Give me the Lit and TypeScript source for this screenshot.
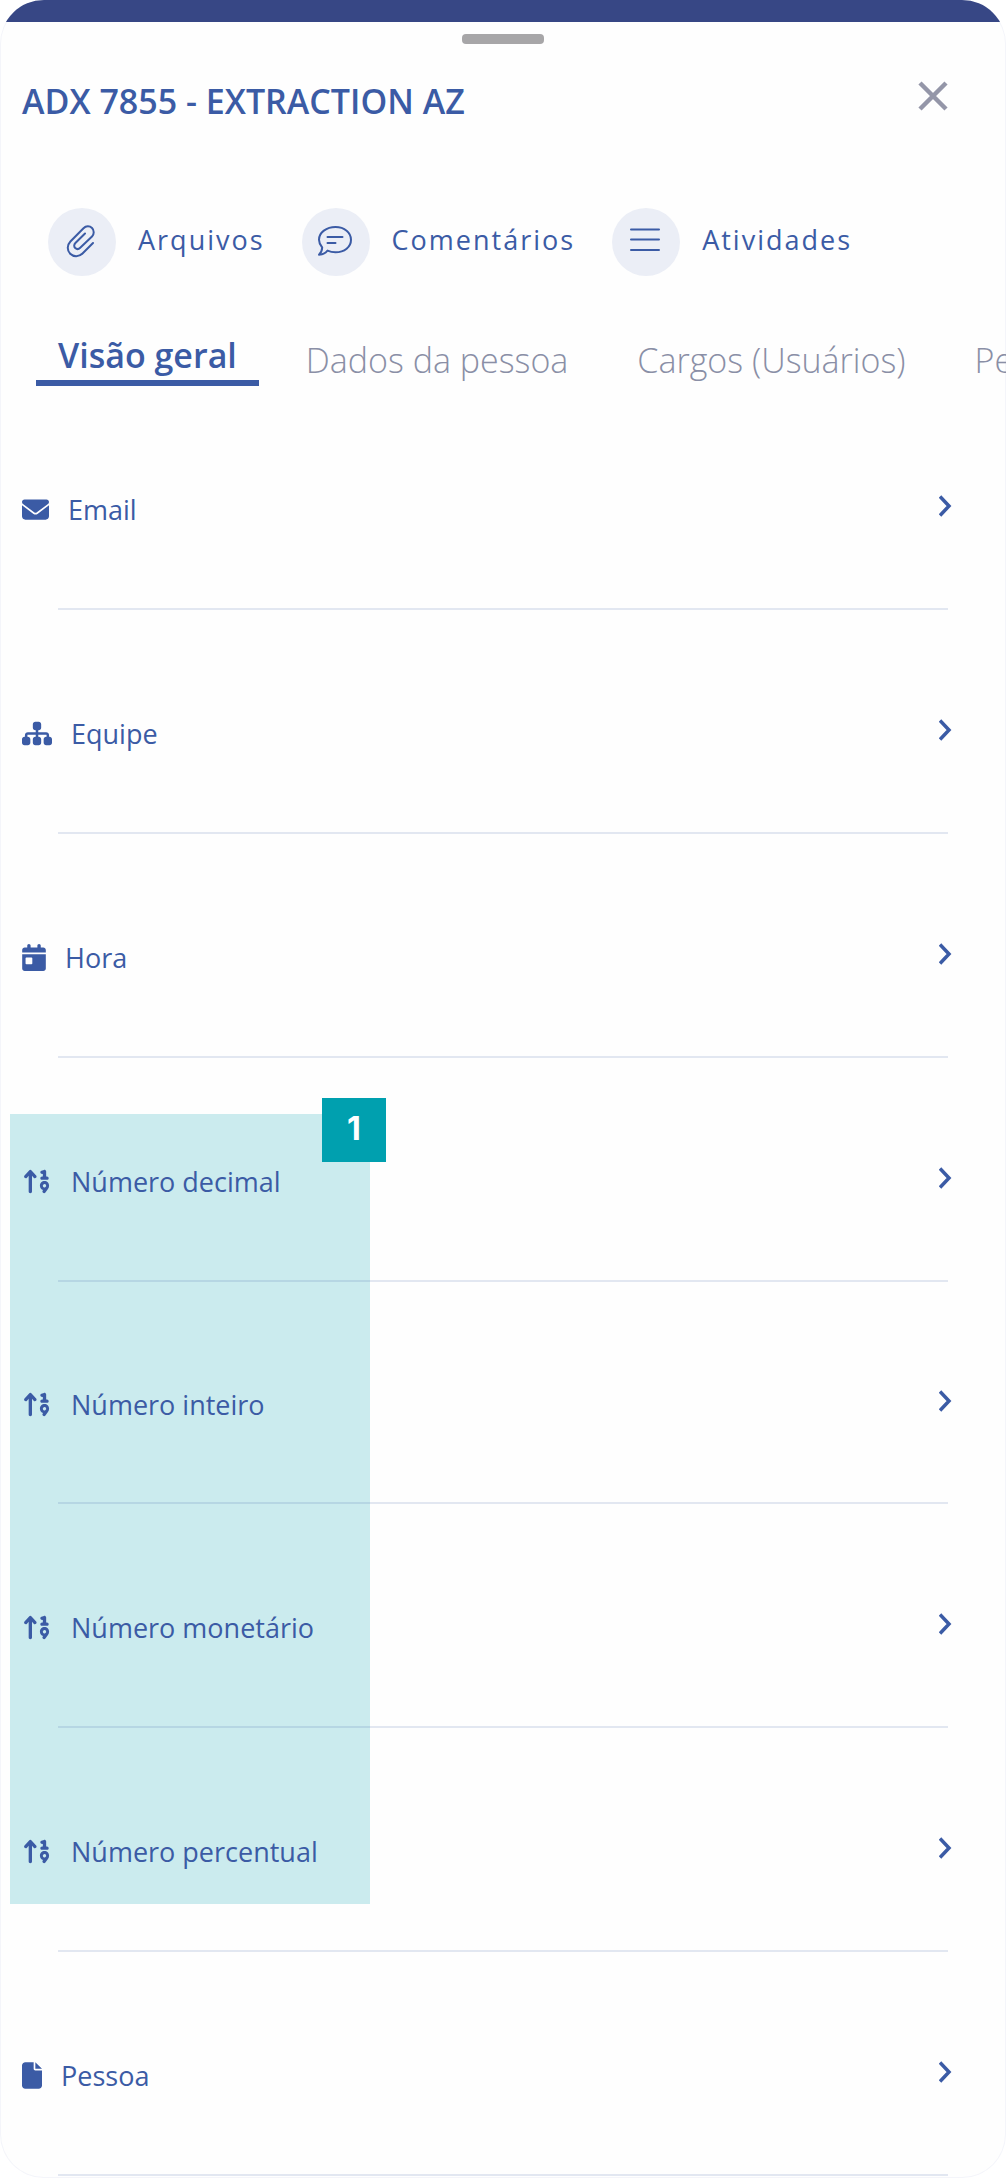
import { LitElement, html, css, svg } from "lit";
import { customElement, property, state } from "lit/decorators.js";

interface Glyph {
  width: number;
  view: string;
  path: string;
}

interface Field {
  label: string;
  icon: keyof typeof GLYPHS;
  short?: boolean;
}

const GLYPHS = {
  envelope: {
    width: 27,
    view: "0 0 512 512",
    path: "M48 64C21.5 64 0 85.5 0 112c0 15.1 7.1 29.3 19.2 38.4L236.8 313.6c11.4 8.5 27 8.5 38.4 0L492.8 150.4c12.1-9.1 19.2-23.3 19.2-38.4c0-26.5-21.5-48-48-48H48zM0 176V384c0 35.3 28.7 64 64 64H448c35.3 0 64-28.7 64-64V176L294.4 339.2c-22.8 17.1-54 17.1-76.8 0L0 176z",
  },
  sitemap: {
    width: 30,
    view: "0 0 576 512",
    path: "M208 80c0-26.5 21.5-48 48-48h64c26.5 0 48 21.5 48 48v64c0 26.5-21.5 48-48 48h-8v40H464c30.9 0 56 25.1 56 56v32h8c26.5 0 48 21.5 48 48v64c0 26.5-21.5 48-48 48H464c-26.5 0-48-21.5-48-48V368c0-26.5 21.5-48 48-48h8V288c0-4.4-3.6-8-8-8H312v40h8c26.5 0 48 21.5 48 48v64c0 26.5-21.5 48-48 48H256c-26.5 0-48-21.5-48-48V368c0-26.5 21.5-48 48-48h8V280H112c-4.4 0-8 3.6-8 8v32h8c26.5 0 48 21.5 48 48v64c0 26.5-21.5 48-48 48H48c-26.5 0-48-21.5-48-48V368c0-26.5 21.5-48 48-48h8V288c0-30.9 25.1-56 56-56H264V192h-8c-26.5 0-48-21.5-48-48V80z",
  },
  calendar: {
    width: 24,
    view: "0 0 448 512",
    path: "M128 0c17.7 0 32 14.3 32 32V64H288V32c0-17.7 14.3-32 32-32s32 14.3 32 32V64h48c26.5 0 48 21.5 48 48v48H0V112C0 85.5 21.5 64 48 64H96V32c0-17.7 14.3-32 32-32zM0 192H448V464c0 26.5-21.5 48-48 48H48c-26.5 0-48-21.5-48-48V192zm80 64c-8.8 0-16 7.2-16 16v96c0 8.8 7.2 16 16 16h96c8.8 0 16-7.2 16-16V272c0-8.8-7.2-16-16-16H80z",
  },
  number: {
    width: 30,
    view: "0 0 576 512",
    path: "M450.7 38c8.3 6 13.3 15.7 13.3 26v96h16c17.7 0 32 14.3 32 32s-14.3 32-32 32H432 384c-17.7 0-32-14.3-32-32s14.3-32 32-32h16V108.4l-5.9 2c-16.8 5.6-34.9-3.5-40.5-20.2s3.5-34.9 20.2-40.5l48-16c9.8-3.3 20.5-1.6 28.8 4.4zM160 32c9 0 17.5 3.8 23.6 10.4l88 96c11.9 13 11.1 33.3-2 45.2s-33.3 11.1-45.2-2L192 146.3V448c0 17.7-14.3 32-32 32s-32-14.3-32-32V146.3L95.6 181.6c-11.9 13-32.2 13.9-45.2 2s-13.9-32.2-2-45.2l88-96C142.5 35.8 151 32 160 32zM445.7 364.9A32 32 0 1 0 418.3 307a32 32 0 1 0 27.4 57.9zm-40.7 54.9C369.6 408.4 344 375.2 344 336c0-48.6 39.4-88 88-88s88 39.4 88 88c0 23.5-7.5 46.3-21.5 65.2L449.7 467c-10.5 14.2-30.6 17.2-44.8 6.7s-17.2-30.6-6.7-44.8l6.8-9.2z",
  },
  file: {
    width: 20,
    view: "0 0 384 512",
    path: "M0 64C0 28.7 28.7 0 64 0H224V128c0 17.7 14.3 32 32 32H384V448c0 35.3-28.7 64-64 64H64c-35.3 0-64-28.7-64-64V64zm384 64H256V0L384 128z",
  },
} satisfies Record<string, Glyph>;

const ACTIONS = [
  {
    label: "Arquivos",
    art: svg`<path d="M28 18 17.500 28.500c-3.500 3.500-9 3.500-12.300.2s-3.300-8.500.2-12.200L18.500 3.200c2.500-2.500 6.200-2.500 8.500-.2s2.300 6 0 8.500L15.200 22.800c-1.500 1.500-3.600 1.500-5 .2s-1.300-3.500.2-5L20 8.500"/>`,
  },
  {
    label: "Comentários",
    art: svg`<path d="M16.500 2C25.500 2 32 7.500 32 14.700s-6.500 12.600-15.500 12.600c-2.900 0-5.600-.6-8-1.700C6.500 28 4 29.700 0 29.700c2-2 3.100-4.500 3.200-7.200C1.300 20.300 0 17.700 0 14.700 0 7.500 7.500 2 16.500 2zM8.500 12h15M8.500 18h8"/>`,
  },
  {
    label: "Atividades",
    art: svg`<path d="M2 4.500h28M2 14.500h28M2 25h28"/>`,
  },
];

const TABS = ["Visão geral", "Dados da pessoa", "Cargos (Usuários)", "Pessoas"];

const BEFORE: Field[] = [
  { label: "Email", icon: "envelope" },
  { label: "Equipe", icon: "sitemap" },
  { label: "Hora", icon: "calendar" },
];
const NUMBERS: Field[] = [
  { label: "Número decimal", icon: "number" },
  { label: "Número inteiro", icon: "number", short: true },
  { label: "Número monetário", icon: "number" },
  { label: "Número percentual", icon: "number" },
];
const AFTER: Field[] = [{ label: "Pessoa", icon: "file" }];

@customElement("field-row")
export class FieldRow extends LitElement {
  @property({ attribute: false }) field!: Field;

  static styles = css`
    :host {
      display: block;
    }
    .row {
      display: flex;
      align-items: center;
      gap: 19px;
      box-sizing: border-box;
      width: 100%;
      min-height: 222px;
      padding: 25px 54px 0 22px;
      border: 0;
      background: none;
      color: #3b5ba5;
      font: 400 27px/36px "Open Sans", sans-serif;
      text-align: left;
      cursor: pointer;
    }
    .short {
      min-height: 220px;
    }
    .glyph {
      flex: none;
      height: 27px;
      fill: currentColor;
    }
    .label {
      flex: 1;
    }
    .chevron {
      flex: none;
      width: 13px;
      height: 24px;
      padding-bottom: 8px;
      fill: none;
      stroke: currentColor;
      stroke-width: 3.5;
    }
    .line {
      height: 2px;
      margin: 0 58px;
      background: rgba(59, 91, 165, 0.14);
    }
  `;

  render() {
    const g = GLYPHS[this.field.icon];
    return html`
      <button class="row ${this.field.short ? "short" : ""}" type="button">
        <svg class="glyph" width=${g.width} viewBox=${g.view} aria-hidden="true">
          <path d=${g.path} />
        </svg>
        <span class="label">${this.field.label}</span>
        <svg class="chevron" viewBox="0 0 13 24" aria-hidden="true">
          <path d="M1 2.500 10 12 1 21.500" />
        </svg>
      </button>
      <div class="line"></div>
    `;
  }
}

@customElement("app-root")
export class AppRoot extends LitElement {
  @state() private tab = 0;

  static styles = css`
    :host {
      display: block;
      color: #3b5ba5;
      font-family: "Open Sans", sans-serif;
    }
    .sheet {
      overflow: hidden;
      padding-bottom: 2px;
      border-radius: 44px;
      background: #fefefe;
      box-shadow: inset 0 0 0 1px #f4f5fa;
    }
    .bar {
      height: 22px;
      background: #374785;
    }
    .handle {
      width: 82px;
      height: 10px;
      margin: 12px auto 0;
      border-radius: 4px;
      background: #a7a6a8;
    }
    .header {
      display: flex;
      justify-content: space-between;
      align-items: flex-start;
      padding: 33px 58px 0 22px;
    }
    .title {
      margin: 0;
      font-size: 34px;
      font-weight: 600;
      line-height: 49px;
    }
    .close {
      display: flex;
      padding: 4px 0;
      border: 0;
      background: none;
      color: #9496a8;
      cursor: pointer;
    }
    .cross {
      width: 30px;
      height: 30px;
      fill: none;
      stroke: currentColor;
      stroke-width: 4.5;
    }
    .actions {
      display: flex;
      gap: 37px;
      padding: 82px 48px 0;
    }
    .action {
      display: flex;
      align-items: center;
      gap: 22px;
      padding: 0;
      border: 0;
      background: none;
      color: inherit;
      font: 400 27px/36px "Open Sans", sans-serif;
      letter-spacing: 2px;
      white-space: nowrap;
      cursor: pointer;
    }
    .caption {
      padding-bottom: 4px;
    }
    .disc {
      display: grid;
      place-items: center;
      width: 68px;
      height: 68px;
      border-radius: 50%;
      background: #ebeef6;
    }
    .art {
      width: 34px;
      height: 34px;
      overflow: visible;
      fill: none;
      stroke: currentColor;
      stroke-width: 2;
      stroke-linejoin: round;
      stroke-linecap: round;
    }
    .tabs {
      display: flex;
      align-items: flex-end;
      gap: 25px;
      overflow: hidden;
      padding: 56px 0 0 36px;
    }
    .tab {
      flex: none;
      padding: 0 22px 3px;
      border: 0;
      background: none;
      color: #8a8fa6;
      font: 300 34px/46px "Open Sans", sans-serif;
      cursor: pointer;
    }
    .active {
      padding-bottom: 2px;
      border-bottom: 6px solid #3b5ba5;
      color: #3b5ba5;
      font-weight: 600;
    }
    .group {
      position: relative;
      isolation: isolate;
    }
    .mark {
      position: absolute;
      z-index: -1;
      top: 56px;
      bottom: 48px;
      left: 10px;
      width: 360px;
      background: rgba(0, 160, 175, 0.2);
    }
    .badge {
      position: absolute;
      top: -16px;
      right: -16px;
      width: 64px;
      height: 64px;
      background: #00a0af;
      color: #fff;
      font-family: Inter, sans-serif;
      font-size: 32px;
      font-weight: 700;
      line-height: 62px;
      text-align: center;
    }
  `;

  private rows(fields: Field[]) {
    return fields.map((f) => html`<field-row .field=${f}></field-row>`);
  }

  render() {
    return html`
      <main class="sheet">
        <div class="bar"></div>
        <div class="handle"></div>
        <header class="header">
          <h1 class="title">ADX 7855 - EXTRACTION AZ</h1>
          <button class="close" type="button" aria-label="Fechar">
            <svg class="cross" viewBox="0 0 30 30" aria-hidden="true">
              <path d="M2 2 28 28M28 2 2 28" />
            </svg>
          </button>
        </header>
        <div class="actions">
          ${ACTIONS.map(
            (a) => html`
              <button class="action" type="button">
                <span class="disc">
                  <svg class="art" viewBox="0 0 34 34" aria-hidden="true">${a.art}</svg>
                </span>
                <span class="caption">${a.label}</span>
              </button>
            `,
          )}
        </div>
        <nav class="tabs" role="tablist">
          ${TABS.map(
            (t, i) => html`
              <button
                class="tab ${i === this.tab ? "active" : ""}"
                type="button"
                role="tab"
                aria-selected=${i === this.tab}
                @click=${() => (this.tab = i)}
              >${t}</button>
            `,
          )}
        </nav>
        <section>
          ${this.rows(BEFORE)}
          <div class="group">
            <div class="mark"><span class="badge">1</span></div>
            ${this.rows(NUMBERS)}
          </div>
          ${this.rows(AFTER)}
        </section>
      </main>
    `;
  }
}
